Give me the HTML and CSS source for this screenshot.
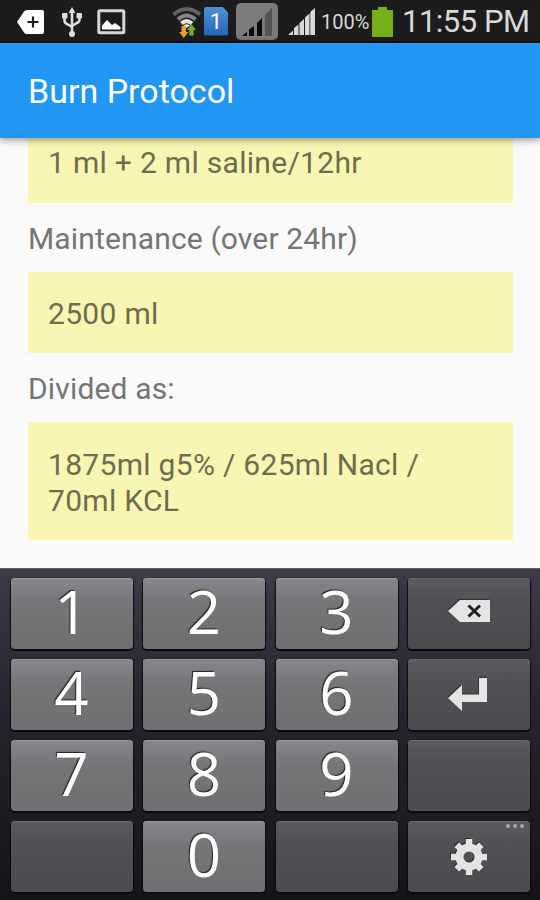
FILE: index.html
```
<!DOCTYPE html>
<html lang="en">
<head>
<meta charset="utf-8">
<title>Burn Protocol</title>
<link rel="stylesheet" href="styles.css">
</head>
<body>
<div class="screen">
    <div class="status-bar">
        <svg class="icon-add" width="32" height="28" viewBox="0 0 32 28">
            <path d="M1 14 L8 3.500 Q9 2 11 2 H26 Q28 2 28 4 V24 Q28 26 26 26 H11 Q9 26 8 24.500 Z" fill="#fff"/>
            <path d="M17 8.500 V19.500 M11.500 14 H22.500" stroke="#1c1c1c" stroke-width="2.200"/>
        </svg>
        <svg class="icon-usb" width="22" height="32" viewBox="0 0 22 32">
            <path d="M11 5 V28 M3.500 9 V14 Q3.500 17 6 18 L11 21 M18.500 9 V13 Q18.500 16 16 17 L11 20" fill="none" stroke="#ddd" stroke-width="2.600"/>
            <path d="M11 1 L14.500 7 H7.500 Z" fill="#ddd"/>
            <rect x="1" y="7" width="5.500" height="5.500" rx="1" fill="#ddd"/>
            <rect x="15.500" y="7" width="5.500" height="5.500" rx="1" fill="#ddd"/>
            <circle cx="11" cy="28" r="3" fill="#ddd"/>
        </svg>
        <svg class="icon-image" width="29" height="26" viewBox="0 0 29 26">
            <rect x="1.800" y="1.800" width="25" height="22" rx="1" fill="#1c1c1c" stroke="#d6d6d6" stroke-width="3"/>
            <path d="M5 20.500 V16.500 L10 11 L15 16 L18 14 L23.500 18 V20.500 Z" fill="#fff"/>
        </svg>
        <svg class="icon-wifi" width="30" height="32" viewBox="0 0 30 32">
            <g fill="none" stroke-width="4">
                <path d="M1.500 8.500 Q14.500 -2.500 28 8.500" stroke="#626262"/>
                <path d="M6 13.500 Q14.500 5.500 23.500 13.500" stroke="#858585"/>
                <path d="M9.500 17.500 Q14.500 12.800 20 17.500" stroke="#e4e4e4"/>
            </g>
            <path d="M11.500 19.500 Q14.500 17 18 19.500 L14.500 22 Z" fill="#e4e4e4"/>
            <path d="M9.500 20 H14 V26 H16.500 L11.800 32 L7 26 H9.500 Z" fill="#f09a32"/>
            <path d="M17.300 29.500 V24 H15 L19.500 18 L24 24 H21.700 V29.500 Z" fill="#73ad20"/>
        </svg>
        <div class="sim">1</div>
        <div class="signal-box">
            <svg width="32" height="30" viewBox="0 0 32 30">
                <path d="M24 29 V8 L31 1 V29 Z" fill="#555"/>
                <path d="M1 29 L6 25 V29 Z M8 29 V22.500 L13 19 V29 Z M16 29 V16 L21 11 V29 Z" fill="#090909"/>
            </svg>
        </div>
        <svg class="icon-signal" width="28" height="28" viewBox="0 0 28 28">
            <path d="M0 27 L5 22.500 V27 Z M6 27 V20 L10.500 16.500 V27 Z M11.500 27 V15 L16 11 V27 Z M17 27 V9.500 L21.500 5.500 V27 Z M22.300 27 V4 L27 0 V27 Z" fill="#d9d9d9"/>
        </svg>
        <span class="percent">100%</span>
        <svg class="icon-battery" width="21" height="30" viewBox="0 0 21 30">
            <path d="M0 3 H6 V0 H15 V3 H21 V30 H0 Z" fill="#76b018"/>
        </svg>
        <span class="clock">11:55 PM</span>
    </div>

    <div class="app-bar"><h1>Burn Protocol</h1></div>

    <div class="content">
        <div class="result first">1 ml + 2 ml saline/12hr</div>
        <div class="label">Maintenance (over 24hr)</div>
        <div class="result">2500 ml</div>
        <div class="label">Divided as:</div>
        <div class="result last">1875ml g5% / 625ml Nacl /<br>70ml KCL</div>
    </div>

    <div class="keyboard">
        <div class="key">1</div>
        <div class="key">2</div>
        <div class="key">3</div>
        <div class="key dark">
            <svg class="delete" width="44" height="24" viewBox="0 0 44 24">
                <path d="M1 12 L13 1 H43 V23 H13 Z" fill="#e4e4e4"/>
                <path d="M21.500 6.500 L33 17.500 M33 6.500 L21.500 17.500" stroke="#222" stroke-width="3"/>
            </svg>
        </div>
        <div class="key">4</div>
        <div class="key">5</div>
        <div class="key">6</div>
        <div class="key dark">
            <svg class="enter" width="42" height="36" viewBox="0 0 42 36">
                <path d="M1 22 L15 9 V18.500 H32 V2 H40 V26 H15 V35 Z" fill="#e4e4e4"/>
            </svg>
        </div>
        <div class="key">7</div>
        <div class="key">8</div>
        <div class="key">9</div>
        <div class="key dark"></div>
        <div class="key dark"></div>
        <div class="key">0</div>
        <div class="key dark"></div>
        <div class="key dark">
            <svg class="gear" width="38" height="38" viewBox="-19 -19 38 38">
                <g stroke="#e4e4e4" stroke-width="6.500">
                    <path d="M0 -18 V-9 M0 18 V9 M-18 0 H-9 M18 0 H9"/>
                    <path d="M-12.200 -12.200 L-7 -7 M12.200 12.200 L7 7 M-12.200 12.200 L-7 7 M12.200 -12.200 L7 -7"/>
                </g>
                <circle r="9.500" fill="none" stroke="#e4e4e4" stroke-width="8"/>
            </svg>
            <span class="more"><i></i><i></i><i></i></span>
        </div>
    </div>
</div>
</body>
</html>
```

FILE: styles.css
```
body {
  margin: 0;
  font-family: Roboto, "Liberation Sans", sans-serif;
}
.screen {
  width: 540px;
  height: 900px;
  display: flex;
  flex-direction: column;
  overflow: hidden;
  background: #fafafa;
}

/* system bar */
.status-bar {
  height: 43px;
  box-sizing: border-box;
  border-bottom: 2px solid #0c0c0c;
  display: flex;
  align-items: center;
  background: #1c1c1c;
  color: #d8d8d8;
  flex: none;
  white-space: nowrap;
}
.status-bar svg {
  flex: none;
}
.icon-add {
  margin: 2px 0 0 16px;
}
.icon-usb {
  margin: 3px 0 0 13px;
}
.icon-image {
  margin: 2px 0 0 14px;
}
.icon-wifi {
  margin: 3px 0 0 46px;
}
.sim {
  width: 24px;
  height: 29px;
  margin: 1px 0 0 2px;
  background: linear-gradient(#5190d8, #2467b9);
  clip-path: polygon(0 0, 76% 0, 100% 20%, 100% 100%, 0 100%);
  border-radius: 2px;
  color: #fff;
  font: 22px/30px Roboto, sans-serif;
  text-align: center;
}
.signal-box {
  width: 42px;
  height: 37px;
  margin: 2px 0 0 8px;
  border-radius: 5px;
  background: #7b7b7b;
  display: flex;
  align-items: center;
  justify-content: center;
}
.icon-signal {
  margin: 3px 0 0 10px;
}
.percent {
  width: 50px;
  margin: 3px 0 0 5px;
  font-size: 20px;
}
.icon-battery {
  margin: 3px 0 0 1px;
}
.clock {
  margin: 2px 0 0 9px;
  font-size: 31px;
  letter-spacing: -0.5px;
}

.app-bar {
  height: 95px;
  flex: none;
  display: flex;
  align-items: center;
  padding-left: 28px;
  background: #2196f3;
  box-shadow: 0 1px 8px rgba(0, 0, 0, 0.5);
  z-index: 1;
}
.app-bar h1 {
  margin: 1px 0 0;
  font-size: 34px;
  font-weight: 400;
  color: #fff;
}

.content {
  height: 430px;
  flex: none;
  box-sizing: border-box;
  padding: 0 27px 0 28px;
  font-size: 30px;
  line-height: 36px;
  letter-spacing: 0.3px;
}
.result {
  padding: 24px 20px 21px;
  background: #f9f6b3;
  color: #6f6c50;
}
.result.first {
  padding: 7px 20px 22px;
}
.result.last {
  padding-top: 25px;
}
.label {
  padding: 18px 0 15px;
  letter-spacing: 0.15px;
  color: #757575;
}

/* numeric keys */
.keyboard {
  flex: 1;
  box-sizing: border-box;
  padding: 9px 10px 8px 10.500px;
  display: grid;
  grid-template-columns: repeat(4, 1fr);
  grid-template-rows: repeat(4, 71px);
  gap: 10px 10.500px;
  border-top: 1px solid #606068;
  background: linear-gradient(#3b3b49, #24242e 45%, #151517);
}
.key {
  position: relative;
  box-sizing: border-box;
  display: flex;
  align-items: center;
  justify-content: center;
  padding-bottom: 4px;
  border-radius: 4px;
  background: linear-gradient(#87888c, #757678 35%, #6e6f71);
  box-shadow: inset 0 1px 0 #96979b, 0 1px 1px 1px #0b0b0f;
  color: #fff;
  font: 60px/67px "Open Sans", "Noto Sans", sans-serif;
  text-shadow: -1px -1px 1px #222;
}
.key.dark {
  background: linear-gradient(#5a5b5f, #505155 35%, #4a4b4e);
  box-shadow: inset 0 1px 0 #68696d, 0 1px 1px 1px #0b0b0f;
}
.key svg {
  filter: drop-shadow(-1px -1px 0 #333);
}
.delete {
  margin-bottom: 1px;
}
.enter {
  margin: 2px 2px 0 0;
}
.gear {
  margin-top: 5px;
}
.more {
  position: absolute;
  top: 3px;
  right: 6px;
  display: flex;
  gap: 3px;
}
.more i {
  width: 4px;
  height: 4px;
  border-radius: 2px;
  background: #a8a8a8;
}
```
